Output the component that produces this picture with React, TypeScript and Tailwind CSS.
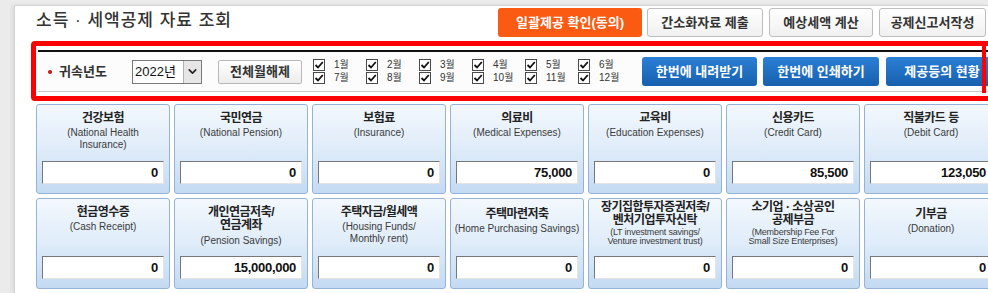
import { ChevronDown } from 'lucide-react'

interface CardItem {
  ko: string[]
  en: string[]
  value: string
  tight?: boolean
  low?: boolean
}

const ROW1: CardItem[] = [
  { ko: ['건강보험'], en: ['(National Health', 'Insurance)'], value: '0' },
  { ko: ['국민연금'], en: ['(National Pension)'], value: '0' },
  { ko: ['보험료'], en: ['(Insurance)'], value: '0' },
  { ko: ['의료비'], en: ['(Medical Expenses)'], value: '75,000' },
  { ko: ['교육비'], en: ['(Education Expenses)'], value: '0' },
  { ko: ['신용카드'], en: ['(Credit Card)'], value: '85,500' },
  { ko: ['직불카드 등'], en: ['(Debit Card)'], value: '123,050' },
]

const ROW2: CardItem[] = [
  { ko: ['현금영수증'], en: ['(Cash Receipt)'], value: '0' },
  { ko: ['개인연금저축/', '연금계좌'], en: ['(Pension Savings)'], value: '15,000,000' },
  { ko: ['주택자금/월세액'], en: ['(Housing Funds/', 'Monthly rent)'], value: '0' },
  { ko: ['주택마련저축'], en: ['(Home Purchasing Savings)'], value: '0', low: true },
  {
    ko: ['장기집합투자증권저축/', '벤처기업투자신탁'],
    en: ['(LT investment savings/', 'Venture investment trust)'],
    value: '0',
    tight: true,
  },
  {
    ko: ['소기업 · 소상공인', '공제부금'],
    en: ['(Membership Fee For', 'Small Size Enterprises)'],
    value: '0',
    tight: true,
  },
  { ko: ['기부금'], en: ['(Donation)'], value: '0', low: true },
]

const MONTHS = [1, 2, 3, 4, 5, 6, 7, 8, 9, 10, 11, 12]

function Check() {
  return (
    <span className="flex h-[12px] w-[12px] items-center justify-center border border-[#4a4a4a] bg-white">
      <svg width="10" height="10" viewBox="0 0 10 10">
        <path d="M1.5 5 L4 7.5 L8.8 2" fill="none" stroke="#111" strokeWidth="1.8" />
      </svg>
    </span>
  )
}

function Card({ item }: { item: CardItem }) {
  const pad = item.tight ? 'pt-[2px]' : item.low ? 'pt-[9px]' : 'pt-[7px]'
  return (
    <div className="flex flex-col rounded-[3px] border border-[#94b3d6] bg-gradient-to-b from-[#f3f8fd] via-[#dfecf9] to-[#c3daf2]">
      <div className={`flex flex-1 flex-col items-center text-center ${pad}`}>
        {item.ko.map((t) => (
          <p key={t} className="text-[12px] font-bold leading-[13px] tracking-[-0.5px] text-[#222] whitespace-nowrap">
            {t}
          </p>
        ))}
        <div className={item.tight ? 'mt-[1px]' : item.ko.length > 1 ? 'mt-[3px]' : 'mt-[2px]'}>
          {item.en.map((t) => (
            <p
              key={t}
              className={`whitespace-nowrap text-[#3a3a3a] ${
                item.tight ? 'text-[9px] leading-[9px] tracking-[-0.2px]' : 'text-[10px] leading-[12px]'
              }`}
            >
              {t}
            </p>
          ))}
        </div>
      </div>
      <div className="mx-[5px] mb-[9px] flex h-[23px] items-center justify-end border border-t-[#777] border-l-[#777] border-r-[#e4e4e4] border-b-[#e4e4e4] bg-white pr-[5px] text-[13px] font-bold tracking-[-0.3px] text-[#111]">
        {item.value}
      </div>
    </div>
  )
}

export default function App() {
  return (
    <div className="h-[293px] w-[988px] overflow-hidden bg-[#ebebeb] pl-[14px] pt-[5px] font-['Liberation_Sans','Noto_Sans_CJK_KR',sans-serif]">
      <div className="h-full border-l border-t border-[#d4d4d4] bg-white pl-[16px] shadow-[-2px_0_4px_rgba(0,0,0,0.08)]">
        {/* header */}
        <div className="flex h-[35px] items-start">
          <h1 className="ml-[5px] mt-[3px] text-[17px] font-medium leading-[24px] tracking-[1px] text-[#333]">
            소득 · 세액공제 자료 조회
          </h1>
          <div className="ml-auto mr-[2px] mt-[2px] flex gap-[5px]">
            <button className="h-[29px] w-[144px] rounded-[3px] bg-[#fa5a12] text-[13px] font-bold text-white">
              일괄제공 확인(동의)
            </button>
            <button className="h-[29px] w-[116px] rounded-[3px] border border-[#bdbdbd] bg-gradient-to-b from-white to-[#f0f0f0] text-[13px] font-bold text-[#333]">
              간소화자료 제출
            </button>
            <button className="ml-[1px] h-[29px] w-[104px] rounded-[3px] border border-[#bdbdbd] bg-gradient-to-b from-white to-[#f0f0f0] text-[13px] font-bold text-[#333]">
              예상세액 계산
            </button>
            <button className="ml-[1px] h-[29px] w-[107px] rounded-[3px] border border-[#bdbdbd] bg-gradient-to-b from-white to-[#f0f0f0] text-[13px] font-bold text-[#333]">
              공제신고서작성
            </button>
          </div>
        </div>

        {/* search bar (highlighted) */}
        <div className="relative w-[980px] rounded-[4px] border-[5px] border-[#ff0000] px-[2px] py-[4px]">
          <div className="flex h-[42px] items-center border-t-2 border-b border-t-[#111] border-b-[#c8c8c8] bg-[#fcfcfc]">
            <div className="flex w-[94px] items-center pl-[10px]">
              <span className="h-[4px] w-[4px] rounded-full bg-[#d01010]" />
              <span className="ml-[7px] text-[13px] font-bold text-[#333]">귀속년도</span>
            </div>
            <div className="flex h-[24px] w-[70px] items-center border border-[#7a7a7a] bg-white">
              <span className="flex-1 pl-[2px] text-[13px] text-[#111]">2022년</span>
              <span className="flex h-full w-[18px] items-center justify-center border-l border-[#b0b0b0] bg-[#e6e6e6]">
                <ChevronDown size={13} strokeWidth={3} color="#222" />
              </span>
            </div>
            <button className="ml-[16px] h-[24px] w-[84px] rounded-[2px] border border-[#b8b8b8] bg-gradient-to-b from-white to-[#ededed] text-[13px] font-bold text-[#333]">
              전체월해제
            </button>
            <div className="ml-[11px] grid grid-cols-[repeat(6,53px)] grid-rows-[13px_13px]">
              {MONTHS.map((m) => (
                <div key={m} className="flex items-center">
                  <Check />
                  <span className="ml-[9px] text-[10px] leading-[10px] text-[#333]">{m}월</span>
                </div>
              ))}
            </div>
            <div className="ml-[11px] flex gap-[6px]">
              <button className="h-[29px] w-[115px] rounded-[3px] bg-gradient-to-b from-[#2b80d6] to-[#165fae] text-[13px] font-bold text-white">
                한번에 내려받기
              </button>
              <button className="h-[29px] w-[116px] rounded-[3px] bg-gradient-to-b from-[#2b80d6] to-[#165fae] text-[13px] font-bold text-white">
                한번에 인쇄하기
              </button>
              <button className="ml-[1px] h-[29px] w-[112px] rounded-[3px] bg-gradient-to-b from-[#2b80d6] to-[#165fae] text-[13px] font-bold text-white">
                제공등의 현황
              </button>
            </div>
          </div>
          <span className="absolute left-[946px] top-[-5px] h-[52px] w-[4px] bg-[#ff0000]" />
        </div>

        {/* deduction cards */}
        <div className="ml-[5px] mt-[3px] grid grid-cols-[repeat(7,134px)] grid-rows-[90px_91px] gap-[4px]">
          {ROW1.map((c) => (
            <Card key={c.ko[0]} item={c} />
          ))}
          {ROW2.map((c) => (
            <Card key={c.ko[0]} item={c} />
          ))}
        </div>
      </div>
    </div>
  )
}
